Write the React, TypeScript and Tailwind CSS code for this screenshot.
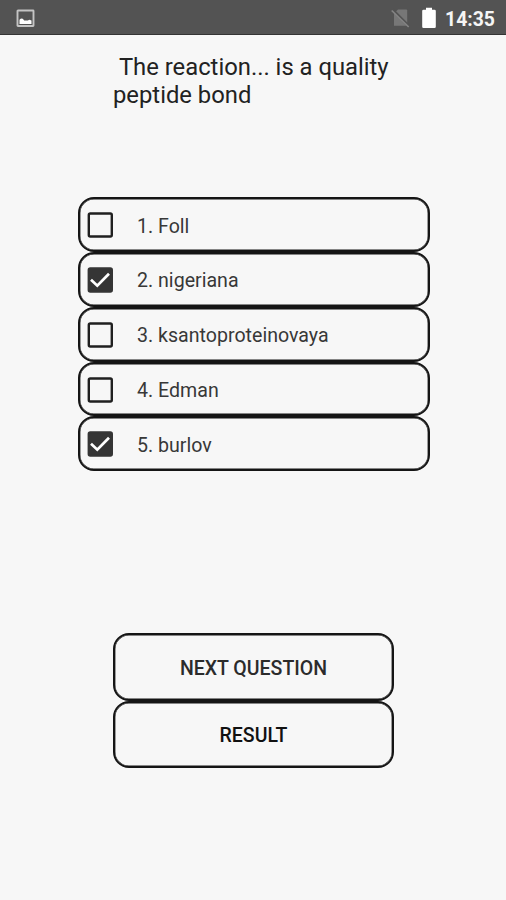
import { useState } from 'react';
import clsx from 'clsx';

const ANSWERS = ['Foll', 'nigeriana', 'ksantoproteinovaya', 'Edman', 'burlov'];

function StatusBar() {
  return (
    <header className="flex h-[35px] shrink-0 items-center border-b border-[#343434] bg-[#535353] pt-0.5 pr-[11px] pl-4">
      {/* Screenshot notification */}
      <svg className="h-[18px] w-[19px]" viewBox="0 0 19 18" fill="none">
        <rect x="1.5" y="1.5" width="16" height="15.5" rx="0.5" stroke="#c4c4c4" strokeWidth="1.9" />
        <path d="M3.5 15v-4.200L5 9.500l1.800.2 1.400 1.800h3.600l1.500-.8 2.200.8V15z" fill="#fff" />
      </svg>

      {/* No SIM */}
      <svg className="ml-auto h-5 w-[19px]" viewBox="0 0 19 20">
        <path d="M7 1.500h8.200q1 0 1 1v15.300H3V5.500z" fill="#777" />
        <path d="M1.500 1.800l17 17" stroke="#535353" strokeWidth="3" />
        <path d="M.7 2.500l17 16.500" stroke="#858585" strokeWidth="1.600" />
      </svg>

      {/* Battery */}
      <svg className="ml-[11px] h-[22px] w-4" viewBox="0 0 16 22">
        <path d="M5 .7h6v2h2.500q1.300 0 1.300 1.300v15.700q0 1.300-1.300 1.300h-11q-1.300 0-1.300-1.300V4q0-1.300 1.300-1.300H5z" fill="#fff" />
      </svg>

      <span className="ml-2 pt-[3px] text-[19.4px] leading-6 font-bold text-[#f5f5f5]">14:35</span>
    </header>
  );
}

function Checkbox({ checked }: { checked: boolean }) {
  return (
    <svg className="mt-px size-[26px] shrink-0" viewBox="0 0 26 26" fill="none">
      <rect
        x="1.8"
        y="1.5"
        width="23"
        height="23"
        rx="1.5"
        stroke={checked ? '#353535' : '#202020'}
        strokeWidth="2.4"
        fill={checked ? '#353535' : 'none'}
      />
      {checked && <path d="M4 12.700l6.300 6L22 6.800" stroke="#fff" strokeWidth="2.7" />}
    </svg>
  );
}

export default function App() {
  const [selected, setSelected] = useState<number[]>([1, 4]);

  const toggle = (index: number) => {
    setSelected((prev) =>
      prev.includes(index) ? prev.filter((i) => i !== index) : [...prev, index]
    );
  };

  return (
    <div className="flex h-[900px] w-[506px] flex-col overflow-hidden bg-[#f7f7f7] font-['Roboto',sans-serif] text-[#222]">
      <StatusBar />

      <main className="flex flex-col">
        <h1 className="mt-[18px] ml-[113px] w-[281px] text-[23.8px] leading-7 whitespace-pre-wrap">
          {' The reaction... is a quality\npeptide bond'}
        </h1>

        {/* Answers */}
        <div className="mt-[88.3px] ml-[78px] flex w-[352px] flex-col">
          {ANSWERS.map((answer, index) => (
            <button
              key={answer}
              type="button"
              role="checkbox"
              aria-checked={selected.includes(index)}
              onClick={() => toggle(index)}
              className="flex h-[54.8px] items-center rounded-2xl border-2 border-[#151515] pl-[7px] text-left inset-shadow-[0_0_0_0.4px_#151515]"
            >
              <Checkbox checked={selected.includes(index)} />
              <span className="ml-6 pt-1 text-[19.6px] leading-6 text-[#383838]">
                {index + 1}. {answer}
              </span>
            </button>
          ))}
        </div>

        {/* Actions */}
        <div className="mt-[162px] ml-[113px] flex w-[281px] flex-col">
          {['Next question', 'Result'].map((label, index) => (
            <button
              key={label}
              type="button"
              className={clsx(
                'h-[67.5px] rounded-2xl border-2 border-[#151515] pt-[3px] text-[19.5px] font-medium uppercase inset-shadow-[0_0_0_0.4px_#151515]',
                index === 0 ? 'text-[#2b2b2b]' : 'text-[#111]'
              )}
            >
              {label}
            </button>
          ))}
        </div>
      </main>
    </div>
  );
}
